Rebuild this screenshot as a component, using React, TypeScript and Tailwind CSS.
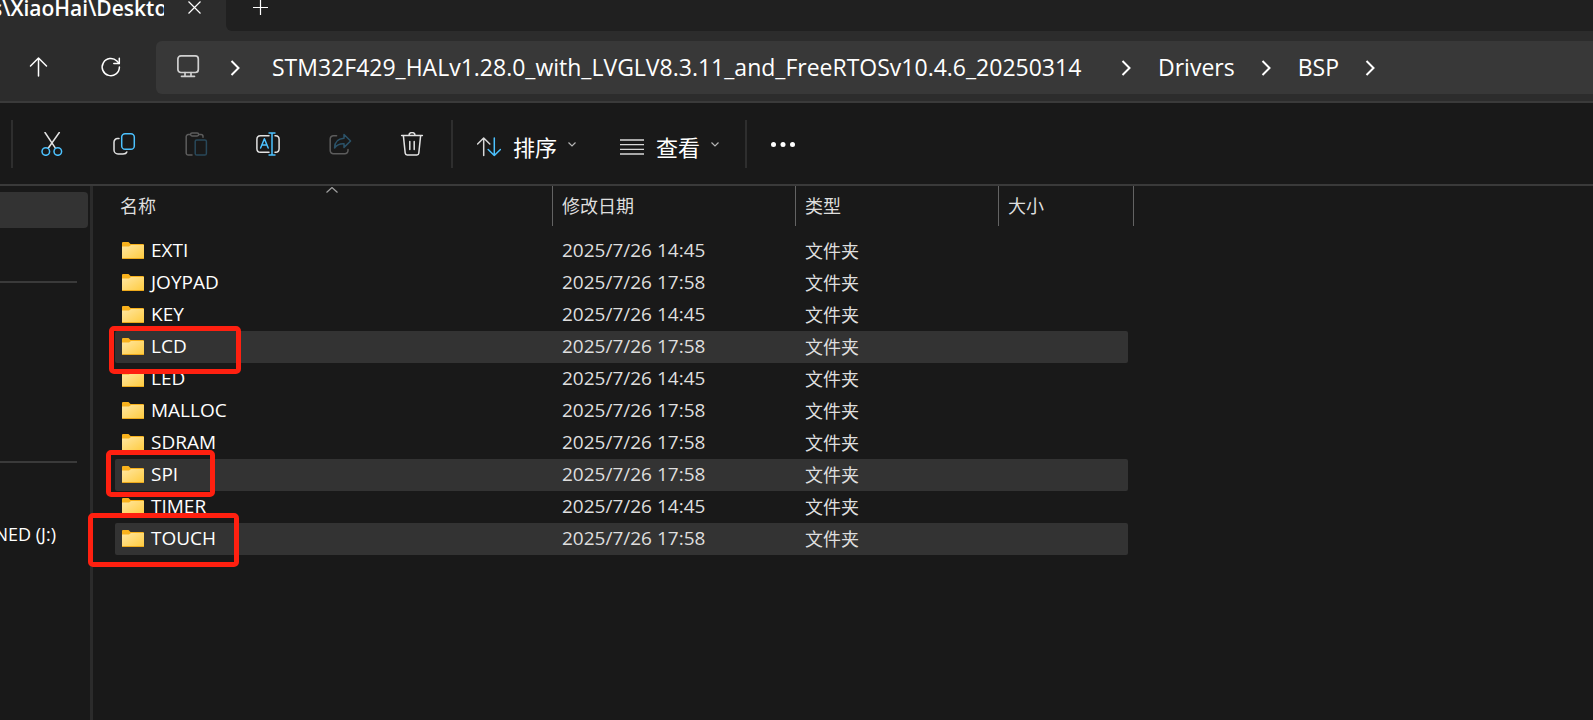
import type { ReactNode } from "react";

interface Entry {
  name: string;
  modified: string;
  selected?: boolean;
}

const ENTRIES: Entry[] = [
  { name: "EXTI", modified: "2025/7/26 14:45" },
  { name: "JOYPAD", modified: "2025/7/26 17:58" },
  { name: "KEY", modified: "2025/7/26 14:45" },
  { name: "LCD", modified: "2025/7/26 17:58", selected: true },
  { name: "LED", modified: "2025/7/26 14:45" },
  { name: "MALLOC", modified: "2025/7/26 17:58" },
  { name: "SDRAM", modified: "2025/7/26 17:58" },
  { name: "SPI", modified: "2025/7/26 17:58", selected: true },
  { name: "TIMER", modified: "2025/7/26 14:45" },
  { name: "TOUCH", modified: "2025/7/26 17:58", selected: true },
];

const CRUMBS = [
  "STM32F429_HALv1.28.0_with_LVGLV8.3.11_and_FreeRTOSv10.4.6_20250314",
  "Drivers",
  "BSP",
];

const BLUE = "#4cc2ff";

function Icon({
  children,
  className = "",
}: {
  children: ReactNode;
  className?: string;
}) {
  return (
    <svg
      viewBox="0 0 24 24"
      fill="none"
      stroke="currentColor"
      strokeWidth="1.5"
      strokeLinecap="round"
      strokeLinejoin="round"
      className={`block h-6 w-6 shrink-0 ${className}`}
      aria-hidden="true"
    >
      {children}
    </svg>
  );
}

function CrumbChevron() {
  return (
    <svg
      viewBox="0 0 10 16"
      fill="none"
      stroke="currentColor"
      strokeWidth="2"
      className="block h-4 w-[10px] shrink-0"
      aria-hidden="true"
    >
      <path d="M1.5 1 L8.5 8 L1.5 15" />
    </svg>
  );
}

function SmallChevron() {
  return (
    <svg
      viewBox="0 0 8 5"
      fill="none"
      stroke="#b4b4b4"
      strokeWidth="1.2"
      className="mb-1 block h-[5px] w-2 shrink-0"
      aria-hidden="true"
    >
      <path d="M0.5 0.5 L4 4 L7.5 0.5" />
    </svg>
  );
}

function FolderIcon() {
  return (
    <svg viewBox="0 0 22 17" className="block h-[17px] w-[22px] shrink-0" aria-hidden="true">
      <defs>
        <linearGradient id="folder" x1="0" y1="0" x2="1" y2="1">
          <stop offset="0" stopColor="#ffe7a2" />
          <stop offset="1" stopColor="#ffcb3e" />
        </linearGradient>
      </defs>
      <path d="M0 1 Q0 0 1 0 H6.5 L8.5 2 H21 Q22 2 22 3 V8 H0 Z" fill="#f9b21c" />
      <path d="M0 4.5 H7 L9 3 H22 V16 Q22 17 21 17 H1 Q0 17 0 16 Z" fill="url(#folder)" />
      <path d="M0 16 H22 Q22 17 21 17 H1 Q0 17 0 16 Z" fill="#eda91b" />
    </svg>
  );
}

const TOOLS = [
  {
    label: "剪切",
    disabled: false,
    icon: (
      <>
        <path d="M5 0.5 L15.4 16.2" />
        <path d="M19.3 0.5 L8.2 16.2" />
        <circle cx="5.8" cy="19.5" r="3.8" stroke={BLUE} />
        <circle cx="17.8" cy="19.5" r="3.8" stroke={BLUE} />
      </>
    ),
  },
  {
    label: "复制",
    disabled: false,
    icon: (
      <>
        <path d="M7 6.6 H5.6 A3.5 3.5 0 0 0 2 10.2 V18 A4 4 0 0 0 6 22 H11 C13 22 14.4 21.2 14.8 20" />
        <rect x="9.7" y="1.7" width="12.6" height="15.6" rx="3.4" stroke={BLUE} />
      </>
    ),
  },
  {
    label: "粘贴",
    disabled: true,
    icon: (
      <>
        <path d="M6 2.6 H4.2 A2 2 0 0 0 2.2 4.6 V21 A2 2 0 0 0 4.2 23 H8" />
        <path d="M15 2.6 H17 A2 2 0 0 1 19 4.6 V5.2" />
        <rect x="6.6" y="0.9" width="8" height="3" rx="1.4" />
        <rect x="11.2" y="8" width="11.2" height="15" rx="1.6" stroke="#28485a" />
      </>
    ),
  },
  {
    label: "重命名",
    disabled: false,
    icon: (
      <>
        <path d="M13 3.7 H4.4 A3.6 3.6 0 0 0 0.9 7.3 V16.7 A3.6 3.6 0 0 0 4.4 20.3 H13" />
        <path d="M19 3.7 H19.6 A3.6 3.6 0 0 1 23.1 7.3 V16.7 A3.6 3.6 0 0 1 19.6 20.3 H19" />
        <path d="M16 0.9 V23 M12.5 0.9 H19.5 M12.5 23 H19.5" stroke={BLUE} strokeLinecap="butt" />
        <path d="M4.6 16 L8.4 6.8 L12.2 16 M5.8 13 H11" stroke={BLUE} />
      </>
    ),
  },
  {
    label: "共享",
    disabled: true,
    icon: (
      <>
        <path d="M8.6 3.7 H5.4 A3.2 3.2 0 0 0 2.2 6.9 V18.6 A3.2 3.2 0 0 0 5.4 21.8 H16.8 A3.2 3.2 0 0 0 20 18.6 V17.6" />
        <path
          d="M16 2.5 L22.6 9 L16 15.4 V11.8 C11.6 11.6 8.6 13 6.6 16 C6.6 10.4 9.8 6.6 16 6.2 Z"
          stroke="#2b5268"
        />
      </>
    ),
  },
  {
    label: "删除",
    disabled: false,
    icon: (
      <>
        <path d="M1.6 3.5 H22.4" />
        <path d="M9 3.2 A3 2.6 0 0 1 15 3.2" />
        <path d="M3.4 3.8 L5.2 21.2 A2 2 0 0 0 7.2 23 H16.8 A2 2 0 0 0 18.8 21.2 L20.6 3.8" />
        <path d="M9.8 9.4 V17.4 M14.2 9.4 V17.4" />
      </>
    ),
  },
];

function TabStrip() {
  return (
    <div className="flex h-[31px] bg-[#2c2c2c]">
      <div className="flex w-[226px] shrink-0 items-center overflow-hidden pb-4">
        <div className="w-[164px] shrink-0 overflow-hidden whitespace-nowrap text-[21px] leading-8 font-semibold">
          <span className="-ml-2">s\XiaoHai\Desktop</span>
        </div>
        <button type="button" aria-label="关闭" className="ml-6 block">
          <svg viewBox="0 0 13 13" className="block h-[13px] w-[13px]" stroke="currentColor" strokeWidth="1.2">
            <path d="M0.5 0.5 L12.5 12.5 M12.5 0.5 L0.5 12.5" />
          </svg>
        </button>
      </div>
      <div className="flex flex-1 items-center rounded-bl-md bg-[#202020] pb-4 pl-[27px]">
        <button type="button" aria-label="新标签页" className="block">
          <svg viewBox="0 0 15 15" className="block h-[15px] w-[15px]" stroke="currentColor" strokeWidth="1.2">
            <path d="M7.5 0 V15 M0 7.5 H15" />
          </svg>
        </button>
      </div>
    </div>
  );
}

function AddressBar() {
  return (
    <div className="flex items-center border-b-2 border-[#3a3a3a] bg-[#2c2c2c] pt-[10px] pb-[7px]">
      <button type="button" aria-label="向上" className="mb-[2px] ml-[27px] block">
        <Icon>
          <path d="M11.5 3 V21 M3.5 11 L11.5 3 L19.5 11" />
        </Icon>
      </button>
      <button type="button" aria-label="刷新" className="mb-[2px] ml-12 block">
        <Icon>
          <path d="M20.4 12 A8.6 8.6 0 1 1 17.9 6 L20.2 8.4" />
          <path d="M20.3 3.2 V8.6 H14.8" />
        </Icon>
      </button>
      <nav
        aria-label="路径"
        className="ml-[33px] flex h-[53px] flex-1 items-center rounded-l-md bg-[#383838] pl-5"
      >
        <Icon className="mb-1 text-[#d0d0d0]">
          <rect x="1.9" y="1.9" width="20.4" height="16.6" rx="3" strokeWidth="1.7" />
          <path d="M9 18.5 V22 M15 18.5 V22 M5.5 22.3 H18.5" strokeWidth="1.7" />
        </Icon>
        <span className="mr-8 ml-[30px]">
          <CrumbChevron />
        </span>
        <ol className="flex items-center">
          {CRUMBS.map((crumb) => (
            <li key={crumb} className="flex items-center justify-between first:min-w-[886px]">
              <a href="#" className="pb-[2px] text-[23px] leading-8 whitespace-nowrap">
                {crumb}
              </a>
              <span className="mr-[27px] ml-[26px]">
                <CrumbChevron />
              </span>
            </li>
          ))}
        </ol>
      </nav>
    </div>
  );
}

function Separator() {
  return <div className="h-12 w-[2px] shrink-0 bg-[#2e2e2e]" />;
}

function Toolbar() {
  return (
    <div className="flex h-[83px] items-center border-b-2 border-[#3a3a3a] pl-[11px]">
      <Separator />
      <div className="mr-[27px] ml-[27px] flex gap-12">
        {TOOLS.map((tool) => (
          <button
            key={tool.label}
            type="button"
            aria-label={tool.label}
            disabled={tool.disabled}
            className={tool.disabled ? "text-[#5c5c5c]" : "text-[#e2e2e2]"}
          >
            <Icon>{tool.icon}</Icon>
          </button>
        ))}
      </div>
      <Separator />
      <button type="button" className="ml-6 flex items-center pt-[6px]">
        <Icon className="text-[#d8d8d8]">
          <path d="M6.7 20.5 V3 M0.6 9 L6.7 3 L12.8 9" />
          <path d="M17.3 3 V20.5 M11.2 14.5 L17.3 20.5 L23.4 14.5" stroke={BLUE} />
        </Icon>
        <span className="mr-[11px] ml-3 text-[22px] leading-8">排序</span>
        <SmallChevron />
      </button>
      <button type="button" className="ml-11 flex items-center pt-[6px]">
        <Icon className="text-[#d8d8d8]">
          <path d="M0 5 H24 M0 9.7 H24 M0 14.3 H24 M0 19 H24" strokeLinecap="butt" strokeWidth="1.3" />
        </Icon>
        <span className="mr-[11px] ml-3 text-[22px] leading-8">查看</span>
        <SmallChevron />
      </button>
      <div className="ml-[26px]">
        <Separator />
      </div>
      <button type="button" aria-label="更多" className="ml-6 block">
        <Icon>
          <g fill="currentColor" stroke="none">
            <circle cx="2.5" cy="12.5" r="2.5" />
            <circle cx="12" cy="12.5" r="2.5" />
            <circle cx="21.5" cy="12.5" r="2.5" />
          </g>
        </Icon>
      </button>
    </div>
  );
}

function Sidebar() {
  return (
    <aside className="w-[93px] shrink-0 overflow-hidden border-r-[3px] border-[#2b2b2b] pt-[6px]">
      <div className="mr-[2px] h-9 rounded-r-sm bg-[#333333]" />
      <hr className="mt-[53px] mr-[13px] border-t-2 border-[#3a3a3a]" />
      <hr className="mt-[178px] mr-[13px] border-t-2 border-[#3a3a3a]" />
      <div className="mt-[55px] flex w-14 justify-end text-[18px] leading-8 whitespace-nowrap">
        NED (J:)
      </div>
    </aside>
  );
}

function FileTable() {
  return (
    <table className="w-[1019px] table-fixed border-separate border-spacing-0 text-left">
      <colgroup>
        <col className="w-[438px]" />
        <col className="w-[243px]" />
        <col className="w-[203px]" />
        <col className="w-[129px]" />
        <col className="w-[6px]" />
      </colgroup>
      <thead className="text-[18px] text-[#dedede]">
        <tr className="h-10">
          <th scope="col" className="relative border-r border-[#636363] pl-[5px] font-normal">
            名称
            <svg
              viewBox="0 0 12 6"
              fill="none"
              stroke="#a0a0a0"
              strokeWidth="1.2"
              className="absolute top-[1px] left-[211px] h-[6px] w-3"
              aria-hidden="true"
            >
              <path d="M0.5 5.5 L6 0.5 L11.5 5.5" />
            </svg>
          </th>
          <th scope="col" className="border-r border-[#636363] pl-[9px] font-normal">
            修改日期
          </th>
          <th scope="col" className="border-r border-[#636363] pl-[9px] font-normal">
            类型
          </th>
          <th scope="col" colSpan={2} className="border-r border-[#636363] pl-[9px] font-normal">
            大小
          </th>
        </tr>
      </thead>
      <tbody className="text-[#dedede] before:block before:h-[9px]">
        {ENTRIES.map((entry) => {
          const bg = entry.selected ? "bg-[#333333]" : "";
          return (
            <tr key={entry.name} className="h-8">
              <td className={`rounded-l-xs pb-px pl-[7px] text-[19px] leading-[31px] ${bg}`}>
                <div className="flex items-center gap-[7px] text-white">
                  <FolderIcon />
                  {entry.name}
                </div>
              </td>
              <td className={`pb-px pl-[9px] text-[19px] leading-[31px] ${bg}`}>
                {entry.modified}
              </td>
              <td className={`pl-[9px] text-[18px] leading-8 ${bg}`}>文件夹</td>
              <td className={`rounded-r-xs ${bg}`} />
              <td />
            </tr>
          );
        })}
      </tbody>
    </table>
  );
}

export default function App() {
  return (
    <div className="flex min-h-screen flex-col overflow-hidden bg-[#191919] font-['Open_Sans','Noto_Sans_CJK_SC',sans-serif] text-white">
      <TabStrip />
      <AddressBar />
      <Toolbar />
      <div className="relative flex flex-1">
        <Sidebar />
        <main className="flex-1 pl-[22px]">
          <FileTable />
        </main>
        {/* Annotation marks over the list */}
        <div className="absolute top-[140px] left-[109px] h-[48px] w-[132px] rounded-[5px] border-[5px] border-[#ff2010]" />
        <div className="absolute top-[264px] left-[106px] h-[47px] w-[109px] rounded-[5px] border-[5px] border-[#ff2010]" />
        <div className="absolute top-[327px] left-[88px] h-[54px] w-[151px] rounded-[5px] border-[5px] border-[#ff2010]" />
      </div>
    </div>
  );
}
